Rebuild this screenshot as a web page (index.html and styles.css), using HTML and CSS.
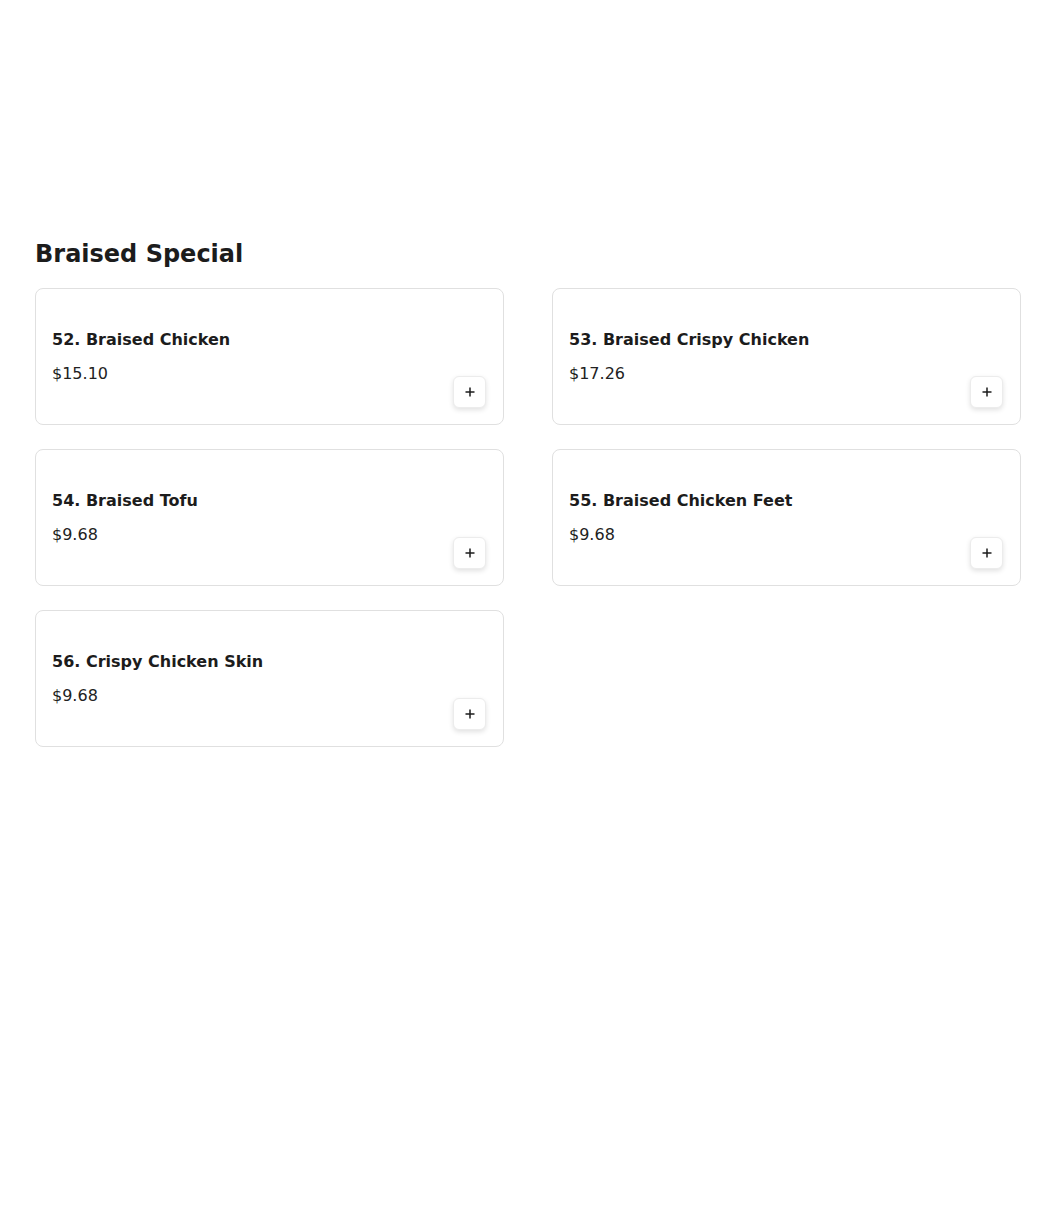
FILE: index.html
```html
<!DOCTYPE html>
<html lang="en">
<head>
<meta charset="utf-8">
<title>Braised Special</title>
<link rel="stylesheet" href="styles.css">
</head>
<body>
<main class="page">
  <section class="category">
    <h2 class="category-title">Braised Special</h2>
    <div class="grid">
      <div class="card">
        <div class="info">
          <div class="name">52. Braised Chicken</div>
          <div class="price">$15.10</div>
        </div>
        <button class="add" aria-label="Add"><svg width="12" height="12" viewBox="0 0 12 12"><path d="M6 1.5v9M1.5 6h9" stroke="#1c1c1c" stroke-width="1.5" fill="none"/></svg></button>
      </div>
      <div class="card">
        <div class="info">
          <div class="name">53. Braised Crispy Chicken</div>
          <div class="price">$17.26</div>
        </div>
        <button class="add" aria-label="Add"><svg width="12" height="12" viewBox="0 0 12 12"><path d="M6 1.5v9M1.5 6h9" stroke="#1c1c1c" stroke-width="1.5" fill="none"/></svg></button>
      </div>
      <div class="card">
        <div class="info">
          <div class="name">54. Braised Tofu</div>
          <div class="price">$9.68</div>
        </div>
        <button class="add" aria-label="Add"><svg width="12" height="12" viewBox="0 0 12 12"><path d="M6 1.5v9M1.5 6h9" stroke="#1c1c1c" stroke-width="1.5" fill="none"/></svg></button>
      </div>
      <div class="card">
        <div class="info">
          <div class="name">55. Braised Chicken Feet</div>
          <div class="price">$9.68</div>
        </div>
        <button class="add" aria-label="Add"><svg width="12" height="12" viewBox="0 0 12 12"><path d="M6 1.5v9M1.5 6h9" stroke="#1c1c1c" stroke-width="1.5" fill="none"/></svg></button>
      </div>
      <div class="card">
        <div class="info">
          <div class="name">56. Crispy Chicken Skin</div>
          <div class="price">$9.68</div>
        </div>
        <button class="add" aria-label="Add"><svg width="12" height="12" viewBox="0 0 12 12"><path d="M6 1.5v9M1.5 6h9" stroke="#1c1c1c" stroke-width="1.5" fill="none"/></svg></button>
      </div>
    </div>
  </section>
</main>
</body>
</html>
```
FILE: styles.css
```css
* { box-sizing: border-box; }
html, body { margin: 0; padding: 0; background: #ffffff; }
body {
  font-family: "DejaVu Sans", sans-serif;
  color: #1c1c1c;
  width: 1050px;
  height: 1224px;
}
.page {
  padding: 238px 0 0 35px;
}
.category { width: 986px; }
.category-title {
  margin: 0 0 18px 0;
  font-size: 24px;
  line-height: 32px;
  font-weight: bold;
  color: #1c1c1c;
}
.grid {
  display: grid;
  grid-template-columns: 1fr 1fr;
  column-gap: 48px;
  row-gap: 24px;
}
.card {
  display: flex;
  justify-content: space-between;
  align-items: flex-end;
  min-height: 137px;
  padding: 16px;
  border: 1px solid #e0e0e0;
  border-radius: 8px;
  background: #fff;
}
.info {
  align-self: flex-start;
  padding-top: 23px;
}
.name {
  font-size: 16px;
  line-height: 24px;
  font-weight: bold;
}
.price {
  margin-top: 10px;
  font-size: 16px;
  line-height: 24px;
  color: #222;
}
.add {
  width: 33px;
  height: 32px;
  margin-right: 1px;
  padding: 0;
  display: flex;
  align-items: center;
  justify-content: center;
  background: #fff;
  border: 1px solid #ececec;
  border-radius: 6px;
  box-shadow: 0 2px 5px rgba(0, 0, 0, 0.12);
  cursor: pointer;
}
.add svg { display: block; }
```
